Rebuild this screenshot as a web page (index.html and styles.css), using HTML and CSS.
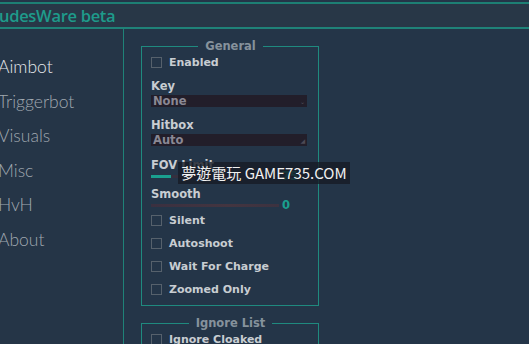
FILE: index.html
```html
<!DOCTYPE html>
<html>
<head>
<meta charset="utf-8">
<link rel="stylesheet" href="styles.css">
</head>
<body>
<div class="app">
  <div class="titlebar"><span class="title">udesWare beta</span></div>
  <div class="content">
    <nav class="sidebar">
      <div class="nav-item active">Aimbot</div>
      <div class="nav-item">Triggerbot</div>
      <div class="nav-item">Visuals</div>
      <div class="nav-item">Misc</div>
      <div class="nav-item">HvH</div>
      <div class="nav-item">About</div>
    </nav>
    <main class="main">
      <fieldset class="group">
        <legend class="legend">General</legend>
        <div class="check first"><span class="box"></span><span>Enabled</span></div>
        <div class="label">Key</div>
        <div class="combo"><span>None</span><span class="arrow">&#8964;</span></div>
        <div class="label gap-combo">Hitbox</div>
        <div class="combo"><span>Auto</span><span class="arrow">&#9698;</span></div>
        <div class="label gap-fov">FOV Limit</div>
        <div class="slider"><div class="track"><div class="fill"></div></div><span class="val">75</span></div>
        <div class="label gap-smooth">Smooth</div>
        <div class="slider"><div class="track dim"></div><span class="val">0</span></div>
        <div class="check"><span class="box"></span><span>Silent</span></div>
        <div class="check"><span class="box"></span><span>Autoshoot</span></div>
        <div class="check"><span class="box"></span><span>Wait For Charge</span></div>
        <div class="check"><span class="box"></span><span>Zoomed Only</span></div>
      </fieldset>
      <fieldset class="group second">
        <legend class="legend">Ignore List</legend>
        <div class="check first"><span class="box"></span><span>Ignore Cloaked</span></div>
      </fieldset>
    </main>
  </div>
  <div class="watermark">夢遊電玩 GAME735.COM</div>
</div>
</body>
</html>
```
FILE: styles.css
```css
html, body {
  margin: 0;
  padding: 0;
  background: #243548;
  overflow: hidden;
  width: 529px;
  height: 344px;
}
.app {
  position: relative;
  padding-top: 2px;
  font-family: "DejaVu Sans", Verdana, sans-serif;
}
.titlebar {
  height: 23px;
  background: #283747;
  border-top: 2px solid #1d7f74;
  border-bottom: 2px solid #1f8278;
  display: flex;
  align-items: center;
}
.title {
  font-family: "Open Sans", sans-serif;
  font-size: 16.5px;
  font-weight: 600;
  color: #1e9b8b;
  margin-left: -1px;
  letter-spacing: -0.3px;
}
.content {
  display: flex;
  height: 320px;
}
.sidebar {
  width: 124px;
  background: #253547;
  border-right: 1.5px solid #1f8278;
  padding-top: 21px;
  box-sizing: border-box;
  flex: none;
}
.nav-item {
  font-family: Lato, sans-serif;
  font-weight: 300;
  font-size: 17.5px;
  line-height: 34.6px;
  color: #a0a8b0;
  margin-left: -2px;
}
.nav-item.active {
  color: #e6e9ec;
}
.main {
  padding-left: 17px;
  padding-top: 11px;
}
.group {
  width: 178px;
  box-sizing: border-box;
  border: 1.5px solid #1f8a7f;
  margin: 0;
  padding: 0 8px 4px 9px;
}
.group.second {
  margin-top: 11px;
}
.legend {
  margin: 0 auto;
  padding: 0 7px;
  font-size: 11.5px;
  font-weight: bold;
  color: #86929c;
  line-height: 12px;
}
.check {
  display: flex;
  align-items: center;
  gap: 7px;
  height: 23px;
  font-size: 11px;
  font-weight: bold;
  color: #c8cdd2;
}
.check.first {
  height: 16px;
  margin-top: 2px;
  margin-bottom: 9px;
}
.box {
  width: 9px;
  height: 9px;
  border: 1px solid #56616c;
  flex: none;
}
.label {
  font-size: 11.5px;
  font-weight: bold;
  color: #c8cdd2;
  height: 14px;
  line-height: 14px;
}
.gap-combo {
  margin-top: 11px;
}
.gap-fov {
  margin-top: 12px;
}
.gap-smooth {
  margin-top: 7px;
}
.combo {
  height: 12px;
  width: 156px;
  background: #221e2a;
  display: flex;
  justify-content: space-between;
  align-items: center;
  padding: 0 2px;
  box-sizing: border-box;
  font-size: 11.5px;
  font-weight: bold;
  color: #8a8894;
  margin-top: 2px;
}
.arrow {
  font-size: 6px;
  color: #4d4a56;
}
.slider {
  display: flex;
  align-items: center;
  height: 8px;
  gap: 3px;
}
.track {
  width: 128px;
  height: 3px;
  background: #35303f;
}
.track.dim {
  background: linear-gradient(90deg, #3a3040, #433540 60%, #3c3240);
}
.fill {
  width: 20px;
  height: 3px;
  background: #1aa08f;
}
.val {
  font-size: 11.5px;
  font-weight: bold;
  color: #1aa08f;
}
.watermark {
  position: absolute;
  left: 178px;
  top: 162px;
  width: 172px;
  height: 22px;
  background: rgba(22, 28, 38, 0.8);
  color: #f2f2f2;
  font-family: "Noto Sans CJK TC", "Noto Sans", sans-serif;
  font-size: 15px;
  line-height: 22px;
  text-align: center;
  white-space: nowrap;
}
```
